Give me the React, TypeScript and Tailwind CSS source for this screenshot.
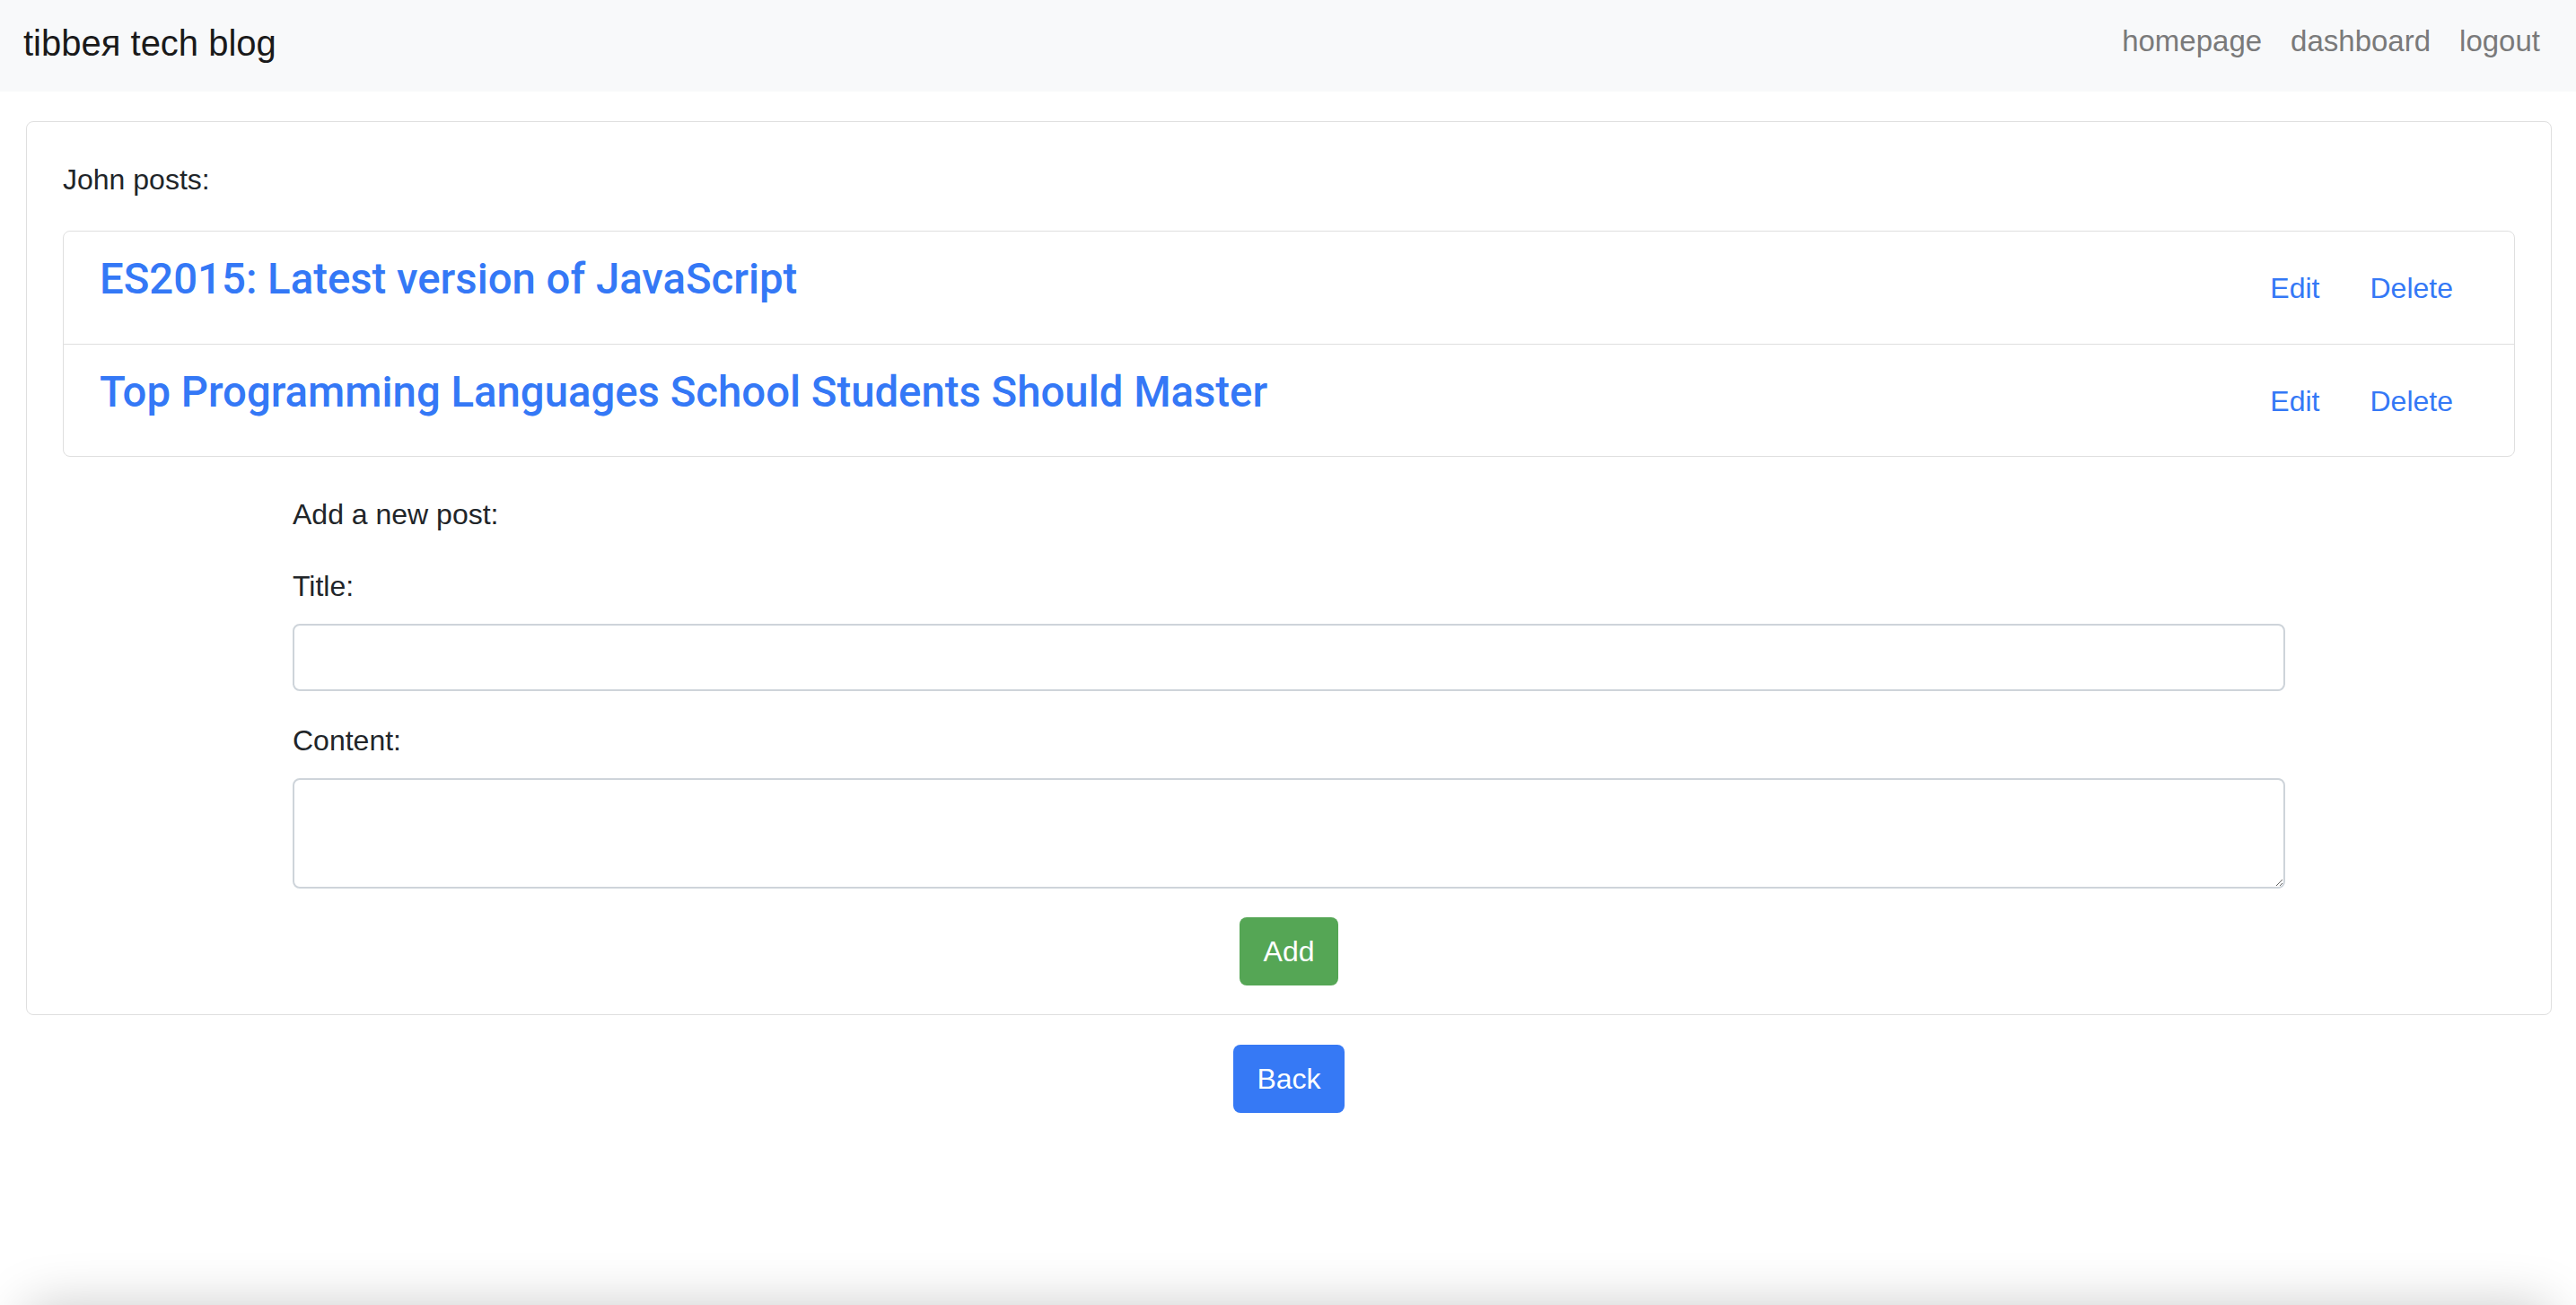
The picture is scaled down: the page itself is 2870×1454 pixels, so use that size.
import React from "react";

const posts = [
  { id: 1, title: "ES2015: Latest version of JavaScript" },
  { id: 2, title: "Top Programming Languages School Students Should Master" },
];

export default function App() {
  return (
    <div className="min-h-screen bg-white font-['Liberation_Sans',Arial,sans-serif] text-[#212529]">
      {/* Navbar */}
      <nav className="flex h-[102px] items-start justify-between bg-[#f8f9fa] pl-[26px] pr-[24px]">
        <a className="mt-[18px] text-[40px] leading-[60px] text-[#1a1a1a]">tibbeя tech blog</a>
        <div className="mt-[22px] flex">
          {["homepage", "dashboard", "logout"].map((l) => (
            <a key={l} className="px-[16px] text-[33px] leading-[48px] text-[#7a7a7a]">
              {l}
            </a>
          ))}
        </div>
      </nav>

      <div className="pl-[29px] pr-[27px] pt-[33px]">
        {/* Card */}
        <div className="rounded-[8px] border border-[#dfdfdf] px-[40px] pt-[40px] pb-[32px]">
          <p className="mb-[33px] text-[32px] leading-[48px]">John posts:</p>

          <div className="rounded-[8px] border border-[#dfdfdf]">
            {posts.map((p, i) => (
              <div
                key={p.id}
                className={`flex h-[125px] items-start justify-between pl-[40px] pr-[43px] pt-[26px] ${i > 0 ? "border-t border-[#dfdfdf]" : ""}`}
              >
                <h4 className="font-['Roboto',sans-serif] text-[47.3px] font-medium leading-[54px] text-[#3478f6]">
                  {p.title}
                </h4>
                <div className="flex gap-[6px]">
                  <button className="border border-transparent px-[24px] py-[12px] text-[32px] leading-[48px] text-[#3478f6]">
                    Edit
                  </button>
                  <button className="border border-transparent px-[24px] py-[12px] text-[32px] leading-[48px] text-[#3478f6]">
                    Delete
                  </button>
                </div>
              </div>
            ))}
          </div>

          {/* New post form */}
          <div className="mt-[40px] px-[256px]">
            <p className="mb-[32px] text-[32px] leading-[48px]">Add a new post:</p>
            <label className="mb-[18px] block text-[32px] leading-[48px]">Title:</label>
            <input className="block h-[75px] w-full rounded-[8px] border-2 border-[#ced4da] px-[24px] text-[32px] outline-none" />
            <label className="mt-[31px] mb-[18px] block text-[32px] leading-[48px]">Content:</label>
            <textarea className="block h-[123px] w-full rounded-[8px] border-2 border-[#ced4da] px-[24px] text-[32px] outline-none" />
            <div className="mt-[32px] flex justify-center">
              <button className="h-[76px] w-[110px] rounded-[8px] bg-[#55a655] text-[32px] text-white">Add</button>
            </div>
          </div>
        </div>

        <div className="mt-[33px] flex justify-center">
          <button className="h-[76px] w-[124px] rounded-[8px] bg-[#3679f5] text-[32px] text-white">Back</button>
        </div>
      </div>

      {/* Footer below the fold */}
      <footer className="mt-[216px] ml-[29px] mr-[27px] h-[200px] rounded-[16px] bg-white shadow-[0_0_60px_rgba(0,0,0,0.22)]" />
    </div>
  );
}
